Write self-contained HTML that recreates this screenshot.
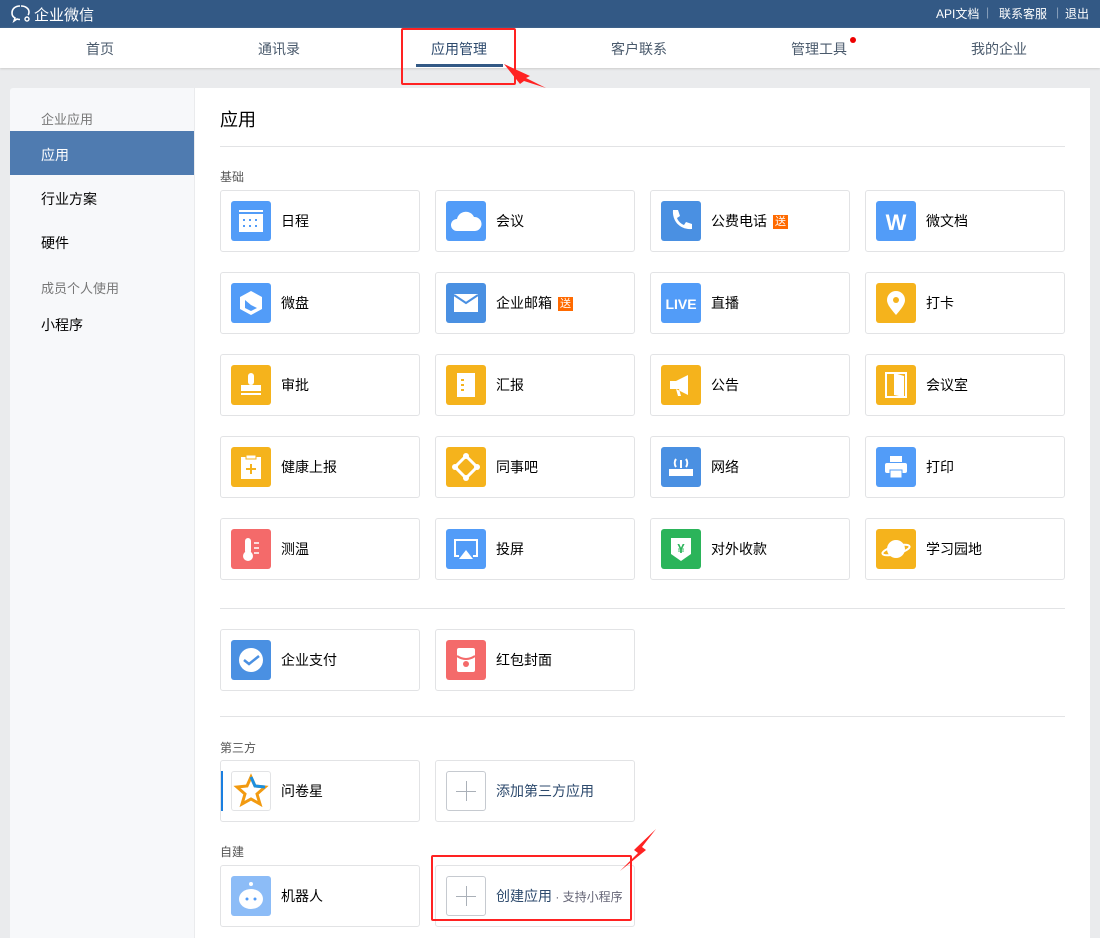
<!DOCTYPE html><html><head><meta charset="utf-8"><style>
*{margin:0;padding:0;box-sizing:border-box}
body{width:1100px;height:933px;overflow:hidden;background:#eaebed;font-family:"Liberation Sans","Noto Sans CJK SC",sans-serif;font-size:14px;color:#000;position:relative}
.a{position:absolute}
.top{left:0;top:0;width:1100px;height:28px;background:#335985;color:#fff}
.top .s{position:absolute;top:5px;font-size:12px;white-space:nowrap}
.nav{left:0;top:28px;width:1100px;height:40px;background:#fff;box-shadow:0 1px 2px #ccc}
.nav span{position:absolute;top:11px;font-size:14px;color:#4a5a6c}
.side{left:10px;top:88px;width:184px;height:850px;background:#f7f8fa;border-radius:3px 0 0 0}
.main{left:195px;top:88px;width:895px;height:850px;background:#fff}
.card{position:absolute;width:200px;height:62px;border:1px solid #e2e3e5;border-radius:3px;background:#fff}
.card .i{position:absolute;left:10px;top:10px;width:40px;height:40px;border-radius:3px;background:#529cf8}
.card .t{position:absolute;left:60px;top:20px;font-size:14px;color:#000;white-space:nowrap}
.b{display:inline-block;background:#ff6a00;color:#fff;font-size:11px;line-height:14px;padding:0 2px;margin-left:6px;vertical-align:1px}
.y{background:#f5b31c!important}.r{background:#f46a6a!important}.g{background:#2bb45a!important}
.hr{position:absolute;left:220px;width:845px;height:1px;background:#e2e3e5}
.lab{position:absolute;left:220px;font-size:12px;color:#555}
.plus{background:#fff!important;border:1px solid #c6cad0}
.plus:before,.plus:after{content:"";position:absolute;background:#aab0b8}
.plus:before{left:9px;top:19px;width:20px;height:1px}.plus:after{left:19px;top:9px;width:1px;height:20px}
</style></head><body>
<div class="a top">
<svg class="a" style="left:10px;top:4px" width="22" height="20" viewBox="0 0 22 20"><path d="M10 2C5 2 2 5 2 9c0 2 1 4 3 5l-1 3 3-2c1 .4 2 .5 3 .5" fill="none" stroke="#fff" stroke-width="1.6"/><path d="M18 11c1-1 1-2 1-3 0-3-3-6-8-6" fill="none" stroke="#fff" stroke-width="1.6"/><circle cx="17" cy="15" r="2" fill="none" stroke="#fff" stroke-width="1.4"/></svg>
<span class="a" style="left:34px;top:4px;font-size:15px">企业微信</span>
<span class="s" style="left:936px">API文档</span><span class="s" style="left:986px;color:#8aa0bb">|</span><span class="s" style="left:999px">联系客服</span><span class="s" style="left:1056px;color:#8aa0bb">|</span><span class="s" style="left:1065px">退出</span>
</div>
<div class="a nav">
<span style="left:86px">首页</span><span style="left:258px">通讯录</span><span style="left:431px;color:#2d4a6d">应用管理</span><span style="left:611px">客户联系</span><span style="left:791px">管理工具</span><span style="left:971px">我的企业</span>
<div class="a" style="left:850px;top:9px;width:6px;height:6px;border-radius:3px;background:#e00"></div>
<div class="a" style="left:416px;top:36px;width:87px;height:3px;background:#335985"></div>
</div>
<div class="a" style="left:401px;top:28px;width:115px;height:57px;border:2px solid #f22;border-radius:2px"></div>
<svg class="a" style="left:500px;top:60px" width="50" height="35"><path d="M4 4 L30 16 L26 18 L46 28 L24 21 L20 24 Z" fill="#f22"/></svg>
<div class="a side">
<div class="a" style="left:31px;top:21px;font-size:13px;color:#777">企业应用</div>
<div class="a" style="left:0;top:43px;width:184px;height:44px;background:#4f7bb0;color:#fff;padding:14px 31px">应用</div>
<div class="a" style="left:31px;top:101px">行业方案</div>
<div class="a" style="left:31px;top:145px">硬件</div>
<div class="a" style="left:31px;top:190px;font-size:13px;color:#777">成员个人使用</div>
<div class="a" style="left:31px;top:227px">小程序</div>
</div>
<div class="a main"></div>
<div class="a" style="left:220px;top:106px;font-size:18px">应用</div>
<div class="hr" style="top:146px"></div>
<div class="lab" style="top:168px">基础</div>

<div class="card" style="left:220px;top:190px"><div class="i"><svg width="40" height="40"><rect x="8" y="9" width="24" height="22" fill="#fff"/><rect x="8" y="11" width="24" height="2" fill="#529cf8"/><g fill="#529cf8"><rect x="12" y="18" width="2" height="2"/><rect x="18" y="18" width="2" height="2"/><rect x="24" y="18" width="2" height="2"/><rect x="12" y="24" width="2" height="2"/><rect x="18" y="24" width="2" height="2"/><rect x="24" y="24" width="2" height="2"/></g></svg></div><div class="t">日程</div></div>
<div class="card" style="left:435px;top:190px"><div class="i"><svg width="40" height="40"><path d="M11 30a6 6 0 0 1 0-12a9 9 0 0 1 17-2a7 7 0 0 1 1 14z" fill="#fff"/></svg></div><div class="t">会议</div></div>
<div class="card" style="left:650px;top:190px"><div class="i" style="background:#4a90e2"><svg width="40" height="40"><path d="M12 9l5 0 2 6-3 2c1 3 4 6 7 7l2-3 6 2v5c-12 1-20-8-19-19z" fill="#fff"/></svg></div><div class="t">公费电话<span class="b">送</span></div></div>
<div class="card" style="left:865px;top:190px"><div class="i"><svg width="40" height="40"><text x="20" y="29" font-size="22" font-weight="bold" fill="#fff" text-anchor="middle" font-family="Liberation Sans">W</text></svg></div><div class="t">微文档</div></div>

<div class="card" style="left:220px;top:272px"><div class="i"><svg width="40" height="40"><path d="M20 8l11 6v12l-11 6-11-6V14z M14 17v8l6 3 6-3-6-3z" fill="#fff" fill-rule="evenodd"/></svg></div><div class="t">微盘</div></div>
<div class="card" style="left:435px;top:272px"><div class="i" style="background:#4a90e2"><svg width="40" height="40"><rect x="8" y="11" width="24" height="18" fill="#fff"/><path d="M8 12l12 8 12-8" fill="none" stroke="#4a90e2" stroke-width="2"/></svg></div><div class="t">企业邮箱<span class="b">送</span></div></div>
<div class="card" style="left:650px;top:272px"><div class="i"><svg width="40" height="40"><text x="20" y="26" font-size="14" font-weight="bold" fill="#fff" text-anchor="middle" font-family="Liberation Sans">LIVE</text></svg></div><div class="t">直播</div></div>
<div class="card" style="left:865px;top:272px"><div class="i y"><svg width="40" height="40"><path d="M20 32c-6-7-9-11-9-15a9 9 0 0 1 18 0c0 4-3 8-9 15z" fill="#fff"/><circle cx="20" cy="17" r="3" fill="#f5b31c"/></svg></div><div class="t">打卡</div></div>

<div class="card" style="left:220px;top:354px"><div class="i y"><svg width="40" height="40"><rect x="17" y="8" width="6" height="12" rx="3" fill="#fff"/><rect x="10" y="20" width="20" height="6" fill="#fff"/><rect x="10" y="28" width="20" height="2" fill="#fff"/></svg></div><div class="t">审批</div></div>
<div class="card" style="left:435px;top:354px"><div class="i y"><svg width="40" height="40"><rect x="11" y="8" width="18" height="24" fill="#fff"/><g fill="#f5b31c"><rect x="15" y="14" width="3" height="2"/><rect x="15" y="19" width="3" height="2"/><rect x="15" y="24" width="3" height="2"/></g></svg></div><div class="t">汇报</div></div>
<div class="card" style="left:650px;top:354px"><div class="i y"><svg width="40" height="40"><path d="M9 16h6l12-6v20l-12-6h-6z M15 24l2 7h3l-2-7" fill="#fff"/></svg></div><div class="t">公告</div></div>
<div class="card" style="left:865px;top:354px"><div class="i y"><svg width="40" height="40"><rect x="10" y="8" width="20" height="24" fill="none" stroke="#fff" stroke-width="2"/><path d="M18 8l10 3v21l-10-2z" fill="#fff"/></svg></div><div class="t">会议室</div></div>

<div class="card" style="left:220px;top:436px"><div class="i y"><svg width="40" height="40"><rect x="10" y="10" width="20" height="22" fill="#fff"/><rect x="15" y="8" width="10" height="4" fill="#fff" stroke="#f5b31c"/><path d="M20 17v10M15 22h10" stroke="#f5b31c" stroke-width="2"/></svg></div><div class="t">健康上报</div></div>
<div class="card" style="left:435px;top:436px"><div class="i y"><svg width="40" height="40"><path d="M20 9l11 11-11 11-11-11z" fill="none" stroke="#fff" stroke-width="3"/><g fill="#fff"><circle cx="20" cy="9" r="3"/><circle cx="31" cy="20" r="3"/><circle cx="20" cy="31" r="3"/><circle cx="9" cy="20" r="3"/></g></svg></div><div class="t">同事吧</div></div>
<div class="card" style="left:650px;top:436px"><div class="i" style="background:#4a90e2"><svg width="40" height="40"><rect x="8" y="22" width="24" height="7" fill="#fff"/><path d="M15 12a7 7 0 0 0 0 8M25 12a7 7 0 0 1 0 8M20 13v8" stroke="#fff" stroke-width="2" fill="none"/></svg></div><div class="t">网络</div></div>
<div class="card" style="left:865px;top:436px"><div class="i"><svg width="40" height="40"><rect x="14" y="9" width="12" height="6" fill="#fff"/><rect x="9" y="16" width="22" height="10" rx="2" fill="#fff"/><rect x="14" y="23" width="12" height="8" fill="#fff" stroke="#529cf8"/></svg></div><div class="t">打印</div></div>

<div class="card" style="left:220px;top:518px"><div class="i r"><svg width="40" height="40"><rect x="14" y="9" width="6" height="16" rx="3" fill="#fff"/><circle cx="17" cy="27" r="5" fill="#fff"/><path d="M23 14h5M23 19h5M23 24h5" stroke="#fff" stroke-width="1.5"/></svg></div><div class="t">测温</div></div>
<div class="card" style="left:435px;top:518px"><div class="i"><svg width="40" height="40"><path d="M13 27H9V11h22v16h-4" fill="none" stroke="#fff" stroke-width="2"/><path d="M20 21l7 9H13z" fill="#fff"/></svg></div><div class="t">投屏</div></div>
<div class="card" style="left:650px;top:518px"><div class="i g"><svg width="40" height="40"><path d="M10 9h20v16l-10 7-10-7z" fill="#fff"/><text x="20" y="24" font-size="13" fill="#2bb45a" text-anchor="middle" font-weight="bold">¥</text></svg></div><div class="t">对外收款</div></div>
<div class="card" style="left:865px;top:518px"><div class="i y"><svg width="40" height="40"><circle cx="20" cy="20" r="9" fill="#fff"/><ellipse cx="20" cy="21" rx="14" ry="4" fill="none" stroke="#fff" stroke-width="2" transform="rotate(-15 20 21)"/></svg></div><div class="t">学习园地</div></div>

<div class="hr" style="top:608px"></div>
<div class="card" style="left:220px;top:629px"><div class="i" style="background:#4a90e2"><svg width="40" height="40"><circle cx="20" cy="20" r="12" fill="#fff"/><path d="M13 20l5 4 10-8" stroke="#4a90e2" stroke-width="2.5" fill="none"/></svg></div><div class="t">企业支付</div></div>
<div class="card" style="left:435px;top:629px"><div class="i r"><svg width="40" height="40"><rect x="11" y="8" width="18" height="24" rx="2" fill="#fff"/><path d="M11 16q9 6 18 0" stroke="#f46a6a" stroke-width="2" fill="none"/><circle cx="20" cy="24" r="3" fill="#f46a6a"/></svg></div><div class="t">红包封面</div></div>

<div class="hr" style="top:716px"></div>
<div class="lab" style="top:739px">第三方</div>
<div class="card" style="left:220px;top:760px"><div class="a" style="left:0;top:10px;width:2px;height:40px;background:#1b7fe0"></div><div class="i" style="background:#fff;border:1px solid #e2e3e5"><svg width="38" height="38"><path d="M19 5l4 9 10 1-8 7 3 10-9-5-9 5 3-10-8-7 10-1z" fill="none" stroke="#f29a10" stroke-width="3"/><path d="M19 5l4 9 10 1" fill="none" stroke="#1b8fe0" stroke-width="3"/></svg></div><div class="t">问卷星</div></div>
<div class="card" style="left:435px;top:760px"><div class="i plus"></div><div class="t" style="color:#2d4a6d">添加第三方应用</div></div>
<div class="lab" style="top:843px">自建</div>
<div class="card" style="left:220px;top:865px"><div class="i" style="background:#8cbcf7"><svg width="40" height="40"><ellipse cx="20" cy="23" rx="12" ry="10" fill="#fff"/><circle cx="20" cy="8" r="2" fill="#fff"/><circle cx="16" cy="23" r="1.5" fill="#529cf8"/><circle cx="24" cy="23" r="1.5" fill="#529cf8"/></svg></div><div class="t">机器人</div></div>
<div class="card" style="left:435px;top:865px"><div class="i plus"></div><div class="t" style="color:#2d4a6d">创建应用<span style="font-size:12px;color:#667"> · 支持小程序</span></div></div>
<div class="a" style="left:431px;top:855px;width:201px;height:66px;border:2px solid #f22;border-radius:2px"></div>
<svg class="a" style="left:610px;top:825px" width="50" height="50"><path d="M46 4 L32 22 L36 25 L10 46 L28 28 L24 25 Z" fill="#f22"/></svg>
</body></html>
